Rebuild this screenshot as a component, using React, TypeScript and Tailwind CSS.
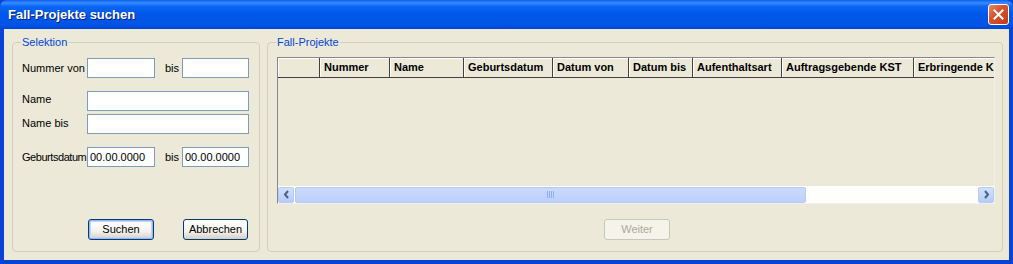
import React from "react";

const font = "font-['Liberation_Sans',Arial,sans-serif]";

function TextBox({ w, value = "" }: { w: string; value?: string }) {
  return (
    <div
      className={`${w} h-[20px] shrink-0 bg-white border border-[#7F9DB9] flex items-center px-[2px] text-[11px] text-black leading-none`}
    >
      {value}
    </div>
  );
}

function XPButton({ label, w, disabled = false, focused = false }: { label: string; w: string; disabled?: boolean; focused?: boolean }) {
  if (disabled) {
    return (
      <div
        className={`${w} h-[21px] rounded-[3px] border border-[#C9C7BA] bg-[#F5F4EA] flex items-center justify-center text-[11px] text-[#ACA899]`}
      >
        {label}
      </div>
    );
  }
  return (
    <div
      className={`${w} h-[21px] rounded-[3px] border border-[#003C74] bg-[linear-gradient(to_bottom,#FFFFFF_0%,#F4F3EE_60%,#D6D0C5_100%)] flex items-center justify-center text-[11px] text-black ${
        focused ? "shadow-[inset_0_0_0_1px_#9DB8EC,inset_0_0_0_2px_#C2D4F6]" : "shadow-[inset_0_-1px_0_#D6D0C5]"
      }`}
    >
      {label}
    </div>
  );
}

function Group({ title, className, children }: { title: string; className: string; children: React.ReactNode }) {
  return (
    <div className={`relative border border-[#D0D0BF] rounded-[4px] ${className}`}>
      <span className="absolute left-[8px] -top-[7px] px-[1px] bg-[#ECE9D8] text-[11px] leading-[13px] text-[#0046D5]">
        {title}
      </span>
      {children}
    </div>
  );
}

const columns: { name: string; w: string }[] = [
  { name: "Nummer", w: "w-[70px]" },
  { name: "Name", w: "w-[74px]" },
  { name: "Geburtsdatum", w: "w-[89px]" },
  { name: "Datum von", w: "w-[76px]" },
  { name: "Datum bis", w: "w-[64px]" },
  { name: "Aufenthaltsart", w: "w-[89px]" },
  { name: "Auftragsgebende KST", w: "w-[132px]" },
  { name: "Erbringende KST", w: "w-[132px]" },
];

function Chevron({ dir }: { dir: "left" | "right" }) {
  return (
    <svg width="7" height="9" viewBox="0 0 7 9">
      {dir === "left" ? (
        <path d="M5 1 L2 4.5 L5 8" stroke="#4D6185" strokeWidth="2" fill="none" />
      ) : (
        <path d="M2 1 L5 4.5 L2 8" stroke="#4D6185" strokeWidth="2" fill="none" />
      )}
    </svg>
  );
}

function ScrollArrow({ dir }: { dir: "left" | "right" }) {
  return (
    <div className="w-[16px] h-[16px] shrink-0 rounded-[2px] border border-[#B8CBF5] bg-[linear-gradient(to_bottom,#D2E0FD,#B5CBF8)] flex items-center justify-center">
      <Chevron dir={dir} />
    </div>
  );
}

export default function App() {
  return (
    <div className={`w-[1013px] h-[264px] flex flex-col bg-[#0842D6] ${font}`}>
      {/* Title bar */}
      <div className="h-[29px] shrink-0 rounded-t-[7px] bg-[linear-gradient(to_bottom,#0A5FF0_0%,#3A8CFF_10%,#0A66F5_22%,#0057E8_50%,#0055E6_85%,#0046D3_100%)] flex items-center pl-[8px] pr-[4px]">
        <span className="text-white font-bold text-[13px] [text-shadow:1px_1px_#0A1E80] flex-1 leading-none">
          Fall-Projekte suchen
        </span>
        <div className="w-[21px] h-[21px] rounded-[3px] border border-white bg-[linear-gradient(135deg,#E88A6C_0%,#D9552E_40%,#C4381A_100%)] flex items-center justify-center">
          <svg width="11" height="11" viewBox="0 0 11 11">
            <path d="M1.5 1.5 L9.5 9.5 M9.5 1.5 L1.5 9.5" stroke="white" strokeWidth="2" strokeLinecap="square" />
          </svg>
        </div>
      </div>

      {/* Client */}
      <div className="flex-1 mx-[4px] mb-[4px] bg-[#ECE9D8] flex pt-[13px] pl-[8px] pr-[6px] pb-[8px] gap-[7px] text-[11px] text-black">
        {/* Selektion */}
        <Group title="Selektion" className="w-[248px] h-[210px] shrink-0">
          <div className="flex flex-col pt-[15px] pl-[9px]">
            <div className="flex items-center h-[20px]">
              <span className="w-[65px]">Nummer von</span>
              <TextBox w="w-[68px]" />
              <span className="w-[27px] pl-[10px]">bis</span>
              <TextBox w="w-[67px]" />
            </div>
            <div className="flex items-center h-[20px] mt-[13px]">
              <span className="w-[65px] -mt-[3px]">Name</span>
              <TextBox w="w-[162px]" />
            </div>
            <div className="flex items-center h-[20px] mt-[3px]">
              <span className="w-[65px] -mt-[2px]">Name bis</span>
              <TextBox w="w-[162px]" />
            </div>
            <div className="flex items-center h-[20px] mt-[13px]">
              <span className="w-[65px] shrink-0 tracking-[-0.45px] whitespace-nowrap">Geburtsdatum</span>
              <TextBox w="w-[68px]" value="00.00.0000" />
              <span className="w-[27px] pl-[10px]">bis</span>
              <TextBox w="w-[67px]" value="00.00.0000" />
            </div>
            <div className="flex mt-[52px] pl-[66px] gap-[29px]">
              <XPButton label="Suchen" w="w-[66px]" focused />
              <XPButton label="Abbrechen" w="w-[65px]" />
            </div>
          </div>
        </Group>

        {/* Fall-Projekte */}
        <Group title="Fall-Projekte" className="flex-1 h-[210px]">
          <div className="flex flex-col pt-[14px] pl-[9px]">
            <div className="w-[718px] h-[147px] border border-[#828790] border-r-[#F0F0F0] border-b-[#F0F0F0] flex flex-col overflow-hidden">
              {/* header */}
              <div className="flex h-[20px] shrink-0 border-b border-b-[#404040] bg-[#ECE9D8] font-bold whitespace-nowrap">
                <div className="w-[42px] shrink-0 border-r border-r-[#404040] shadow-[inset_1px_1px_0_#FFFFFF]" />
                {columns.map((c) => (
                  <div
                    key={c.name}
                    className={`${c.w} shrink-0 border-r border-r-[#404040] shadow-[inset_1px_1px_0_#FFFFFF] flex items-center pl-[4px] overflow-hidden`}
                  >
                    {c.name}
                  </div>
                ))}
              </div>
              {/* body */}
              <div className="flex-1 bg-[#ECE9D8]" />
              {/* horizontal scrollbar */}
              <div className="h-[17px] shrink-0 flex items-center bg-[#FEFEFB]">
                <ScrollArrow dir="left" />
                <div className="flex-1 h-[16px] flex">
                  <div className="w-[511px] h-[16px] ml-[1px] rounded-[2px] border border-[#B8CBF5] bg-[linear-gradient(to_bottom,#CADAFC,#BCD0FA)] flex items-center justify-center">
                    <div className="flex gap-[1px]">
                      <div className="w-[1px] h-[7px] bg-[#8CAEF5]" />
                      <div className="w-[1px] h-[7px] bg-[#8CAEF5]" />
                      <div className="w-[1px] h-[7px] bg-[#8CAEF5]" />
                      <div className="w-[1px] h-[7px] bg-[#8CAEF5]" />
                    </div>
                  </div>
                </div>
                <ScrollArrow dir="right" />
              </div>
            </div>
            <div className="flex mt-[15px] pl-[327px]">
              <XPButton label="Weiter" w="w-[66px]" disabled />
            </div>
          </div>
        </Group>
      </div>
    </div>
  );
}
